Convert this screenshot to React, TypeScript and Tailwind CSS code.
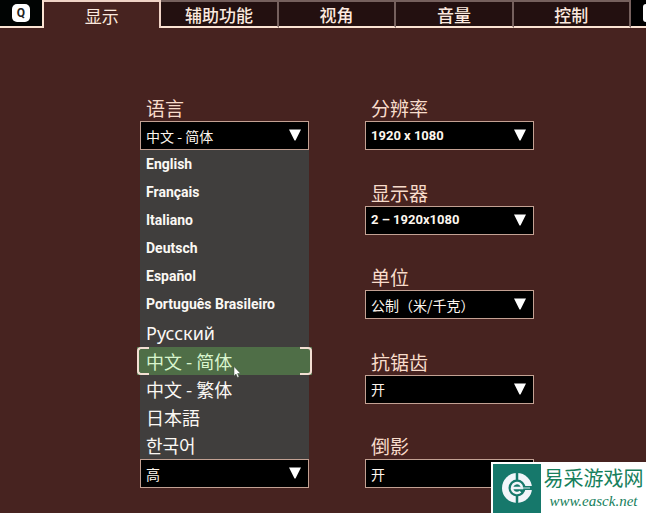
import { useState } from "react";

const tabs = ["显示", "辅助功能", "视角", "音量", "控制"];

const languages = [
  { label: "English", lang: "en" },
  { label: "Français", lang: "fr" },
  { label: "Italiano", lang: "it" },
  { label: "Deutsch", lang: "de" },
  { label: "Español", lang: "es" },
  { label: "Português Brasileiro", lang: "pt" },
  { label: "Русский", lang: "ru" },
  { label: "中文 - 简体", lang: "zh-Hans" },
  { label: "中文 - 繁体", lang: "zh-Hant" },
  { label: "日本語", lang: "ja" },
  { label: "한국어", lang: "ko" },
];

const settings = [
  { id: "resolution", label: "分辨率", value: "1920 x 1080" },
  { id: "monitor", label: "显示器", value: "2 – 1920x1080" },
  { id: "units", label: "单位", value: "公制（米/千克）" },
  { id: "antialiasing", label: "抗锯齿", value: "开" },
  { id: "reflections", label: "倒影", value: "开" },
];

const languageFont = (lang: string) => {
  if (lang === "ru") return "font-['Noto_Sans',sans-serif] text-[18px]";
  if (lang === "ja") return "font-['Noto_Sans_CJK_JP',sans-serif] text-[18px]";
  if (lang === "ko") return "font-['Noto_Sans_CJK_KR',sans-serif] text-[18px]";
  if (lang.startsWith("zh"))
    return "font-['Noto_Sans_CJK_SC',sans-serif] text-[18px]";
  return "font-['Roboto',sans-serif] text-[14px] font-bold";
};

type SelectProps = {
  id: string;
  value: string;
  ariaLabel?: string;
};

const Select = ({ id, value, ariaLabel }: SelectProps) => {
  const isLatin = /^[\x20-\x7e–]+$/.test(value);

  return (
    <div className="relative">
      <select
        id={id}
        aria-label={ariaLabel}
        className={`block h-[29px] w-full appearance-none border border-[#c3a193] bg-black pl-[5px] pr-8 leading-5 text-[#fdf6ee] ${
          isLatin
            ? "font-['Roboto',sans-serif] text-[13px] font-bold"
            : "font-['Noto_Sans_CJK_SC',sans-serif] text-[14px]"
        }`}
      >
        <option>{value}</option>
      </select>
      <svg
        className="pointer-events-none absolute right-2 top-2 h-3 w-3"
        viewBox="0 0 12 12"
        fill="#fff"
      >
        <path d="M0 .5h12L6.5 11.5h-1z" />
      </svg>
    </div>
  );
};

const Field = ({ id, label, value }: { id: string; label: string; value: string }) => (
  <div>
    <label
      htmlFor={id}
      className="block h-6 pl-1.5 text-[19px] leading-[22px] text-[#f8dccb]"
    >
      {label}
    </label>
    <Select id={id} value={value} />
  </div>
);

const Watermark = () => (
  <div className="fixed bottom-0 right-0 z-20 flex bg-white pl-0.5 pt-0.5">
    <svg className="h-[49px] w-12" viewBox="0 0 48 49">
      <rect width="48" height="49" fill="#16786b" />
      <circle cx="24" cy="24" r="15" fill="#f2f5fa" />
      <circle cx="24" cy="24" r="8.500" fill="#16786b" />
      <path d="M24 7v10M24 31v10" stroke="#16786b" strokeWidth="2.5" />
      <path d="M29 22h11v4H29z" fill="#16786b" />
      <path
        d="M19.500 24h9.500a5 5 0 1 0-1.500 3.600"
        stroke="#f2f5fa"
        strokeWidth="2.5"
        fill="none"
      />
      <path d="M27 24h10" stroke="#cfe3e6" strokeWidth="1" />
    </svg>
    <div className="flex w-[105px] flex-col items-center text-[#16805c]">
      <span className="text-[20px] leading-7">易采游戏网</span>
      <span className="font-['Liberation_Serif',serif] text-[15px] italic leading-[18px]">
        www.easck.net
      </span>
    </div>
  </div>
);

const App = () => {
  const [activeTab, setActiveTab] = useState("显示");
  const [language, setLanguage] = useState("中文 - 简体");

  return (
    <div className="flex min-h-screen flex-col bg-[#472320] font-['Noto_Sans_CJK_SC',sans-serif]">
      <header className="grid h-7 grid-cols-[44px_repeat(5,minmax(0,1fr))_15px] overflow-hidden bg-[#231010]">
        <div className="flex items-center justify-center border-b-2 border-r-2 border-[#fbe3d2] bg-[#010403]">
          <kbd className="flex h-[18px] w-[18px] items-center justify-center rounded-[5px] bg-white font-['Roboto',sans-serif] text-[12px] font-bold leading-none text-[#222]">
            Q
          </kbd>
        </div>
        <div role="tablist" className="col-span-5 grid grid-cols-5">
          {tabs.map((tab) => (
            <button
              key={tab}
              role="tab"
              aria-selected={tab === activeTab}
              onClick={() => setActiveTab(tab)}
              className={`border-r-2 border-t-2 pt-0.5 text-[17px] text-[#fbe9df] ${
                tab === activeTab
                  ? "border-[#f0d3c6] bg-[#472320] leading-6"
                  : "border-b-2 border-r-[#75605d] border-t-[#75605d] border-b-[#fbe3d2] font-medium leading-[22px]"
              }`}
            >
              {tab}
            </button>
          ))}
        </div>
        <div className="flex items-center justify-end border-b-2 border-[#fbe3d2] bg-black">
          <span className="h-[18px] w-[3px] rounded-l-[3px] bg-white" />
        </div>
      </header>

      <main className="ml-[140px] mr-[112px] grid flex-1 grid-cols-2 gap-14 pb-[25px] pt-[69px]">
        <div className="relative flex flex-col justify-between">
          <Field id="language" label="语言" value={language} />
          <ul className="absolute inset-x-0 bottom-[29px] top-[53px] z-10 grid auto-rows-fr bg-[#403e3d]">
            {languages.map(({ label, lang }) => {
              const selected = label === language;

              return (
                <li key={lang} className="relative flex">
                  {selected && (
                    <>
                      <span className="absolute -inset-x-[3px] inset-y-0 bg-[#4f6e47]" />
                      <span className="absolute -left-[3px] inset-y-0 w-3 rounded-l-sm border-y-2 border-l-2 border-[#f3dfd3]" />
                      <span className="absolute -right-[3px] inset-y-0 w-3 rounded-r-sm border-y-2 border-r-2 border-[#f3dfd3]" />
                    </>
                  )}
                  <button
                    lang={lang}
                    onClick={() => setLanguage(label)}
                    className={`relative w-full whitespace-nowrap pl-1.5 text-left leading-7 ${
                      selected ? "text-[#d9f5cd]" : "text-[#fbf8f4]"
                    } ${languageFont(lang)}`}
                  >
                    {label}
                  </button>
                  {selected && (
                    <svg
                      className="pointer-events-none absolute left-[93px] top-[19px] z-10 h-3 w-2"
                      viewBox="0 0 8 12"
                    >
                      <path
                        d="M1 .5v9.500l2-2 1.500 3.500 1.500-.7L4.600 7.500H7.500z"
                        fill="#fff"
                        stroke="#3b4a38"
                        strokeWidth=".5"
                      />
                    </svg>
                  )}
                </li>
              );
            })}
          </ul>
          <Select id="quality" value="高" ariaLabel="画质" />
        </div>

        <div className="flex flex-col justify-between">
          {settings.map((setting) => (
            <Field key={setting.id} {...setting} />
          ))}
        </div>
      </main>

      <Watermark />
    </div>
  );
};

export default App;
